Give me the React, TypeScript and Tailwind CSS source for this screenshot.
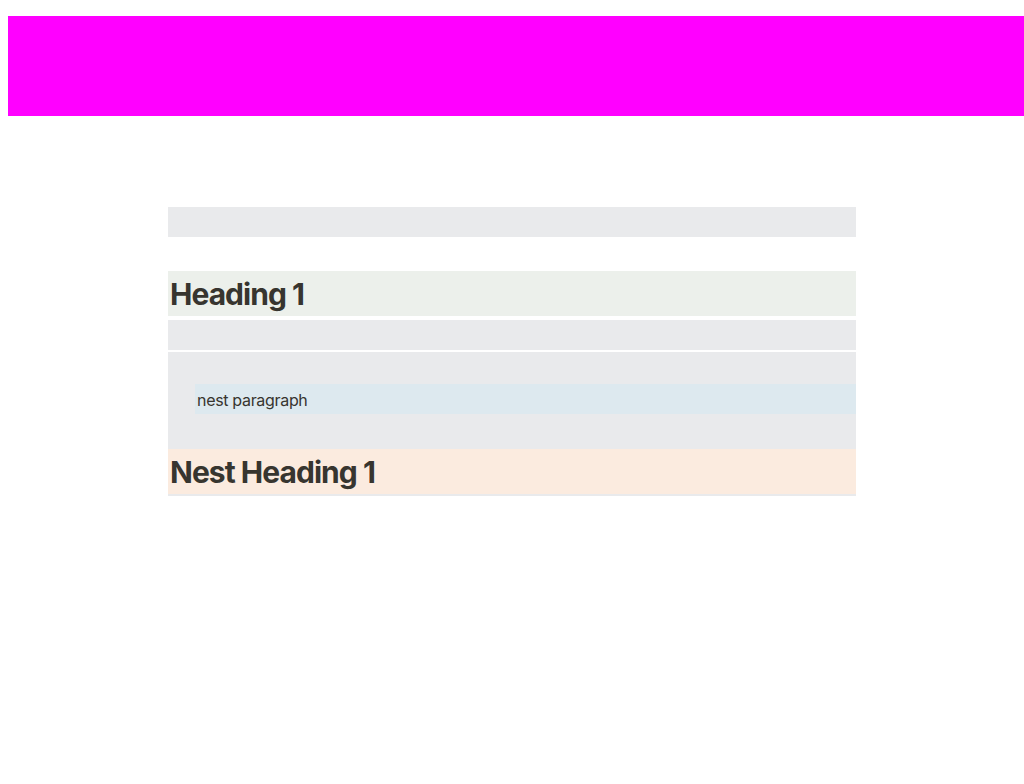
import React from 'react';

const font = { fontFamily: 'Inter, "Noto Sans", sans-serif' };

export default function App() {
  return (
    <div className="min-h-[784px] bg-white text-[#37352f]" style={font}>
      {/* Banner */}
      <div className="ml-2 mt-4 h-[100px] bg-[#ff00ff]" />

      {/* Page body */}
      <div className="mx-auto mt-[91px] flex w-[688px] flex-col">
        <div className="h-[30px] bg-[#e9eaec]" />

        <h1 className="mt-[34px] bg-[#ecf0eb] px-[2px] pt-[4px] pb-[2px] text-[30px] font-bold leading-[39px] tracking-[-0.032em]">
          Heading 1
        </h1>

        <div className="mt-[4px] h-[30px] bg-[#e9eaec]" />

        {/* Nested group */}
        <div className="mt-[2px] flex flex-col bg-[#e9eaec] pt-[32px] pb-[2px]">
          <p className="ml-[27px] bg-[#dde9ef] px-[2px] pt-[4px] pb-[2px] text-[16px] leading-[24px] tracking-[-0.02em]">
            nest paragraph
          </p>
          <h1 className="mt-[35px] bg-[#fbebdf] px-[2px] pt-[4px] pb-[2px] text-[30px] font-bold leading-[39px] tracking-[-0.032em]">
            Nest Heading 1
          </h1>
        </div>
      </div>
    </div>
  );
}
